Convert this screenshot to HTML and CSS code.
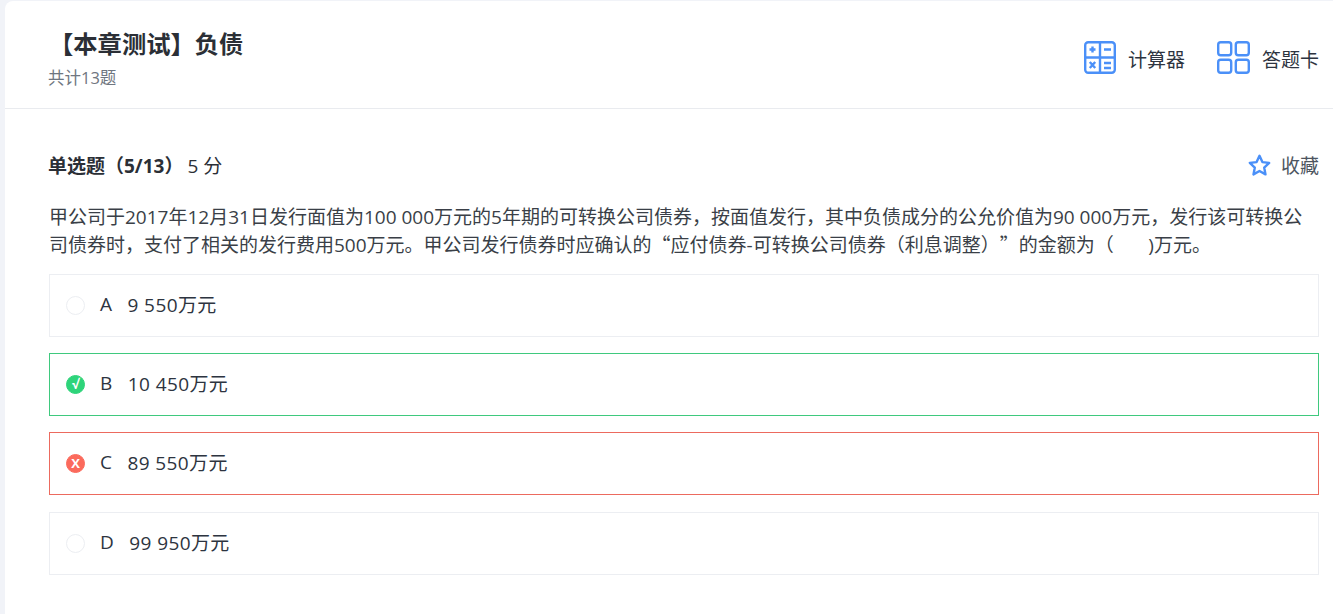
FILE: index.html
```html
<!DOCTYPE html>
<html lang="zh-CN">
<head>
<meta charset="utf-8">
<title>本章测试</title>
<link rel="stylesheet" href="styles.css">
</head>
<body>
<main class="card">
  <header class="head">
    <div class="head-text">
      <h1 class="title">【本章测试】负债</h1>
      <p class="count">共计13题</p>
    </div>
    <div class="tools">
      <div class="tool">
        <svg class="tool-icon" width="32" height="33" viewBox="0 0 32 33" fill="none" stroke="#4b90f8" stroke-width="2.400">
          <rect x="1.200" y="1.200" width="29.600" height="30.600" rx="3"/>
          <path d="M16 1v31M1 16.500h30"/>
          <path d="M5.500 8.500h6M8.500 5.500v6M20 8.500h7M5.800 21l5.400 6M11.200 21l-5.400 6M20 22h7M20 27h7"/>
        </svg>
        <span class="tool-label">计算器</span>
      </div>
      <div class="tool">
        <svg class="tool-icon" width="33" height="33" viewBox="0 0 33 33" fill="none" stroke="#4b90f8" stroke-width="2.400">
          <rect x="1.200" y="1.200" width="13" height="13" rx="2.500"/>
          <rect x="18.800" y="1.200" width="13" height="13" rx="2.500"/>
          <rect x="1.200" y="18.800" width="13" height="13" rx="2.500"/>
          <rect x="18.800" y="18.800" width="13" height="13" rx="2.500"/>
        </svg>
        <span class="tool-label">答题卡</span>
      </div>
    </div>
  </header>
  <section class="body">
    <div class="q-head">
      <div class="q-type"><strong>单选题（5/13）</strong><span class="score">5 分</span></div>
      <div class="fav">
        <svg width="23" height="23" viewBox="0 0 23 23" fill="none" stroke="#4b90f8" stroke-width="2.400" stroke-linejoin="round">
          <path d="M11.500 1.800l2.900 6.300 6.800.8-5 4.700 1.300 6.800-6-3.400-6 3.400 1.300-6.800-5-4.700 6.800-.8z"/>
        </svg>
        <span>收藏</span>
      </div>
    </div>
    <p class="stem">甲公司于2017年12月31日发行面值为100 000万元的5年期的可转换公司债券，按面值发行，其中负债成分的公允价值为90 000万元，发行该可转换公司债券时，支付了相关的发行费用500万元。甲公司发行债券时应确认的<span class="cjk">“</span>应付债券-可转换公司债券（利息调整）<span class="cjk">”</span>的金额为（&nbsp;&nbsp;&nbsp;&nbsp;&nbsp;&nbsp;&nbsp;)万元。</p>
    <ul class="options">
      <li class="option">
        <span class="mark"></span><span class="letter">A</span><span class="answer">9 550万元</span>
      </li>
      <li class="option right">
        <span class="mark">√</span><span class="letter">B</span><span class="answer">10 450万元</span>
      </li>
      <li class="option wrong">
        <span class="mark">X</span><span class="letter">C</span><span class="answer">89 550万元</span>
      </li>
      <li class="option">
        <span class="mark"></span><span class="letter">D</span><span class="answer">99 950万元</span>
      </li>
    </ul>
  </section>
</main>
</body>
</html>
```

FILE: styles.css
```css
* { box-sizing: border-box; }
html, body { margin: 0; padding: 0; height: 100%; overflow: hidden; }
body {
  background: #f1f3f8;
  padding: 1px 0 0 5px;
  font-family: "Open Sans", "Noto Sans CJK SC", sans-serif;
  color: #2d3440;
  text-spacing-trim: space-all;
}
.card {
  background: #fff;
  border-radius: 8px 0 0 0;
  height: 100%;
}
.head {
  height: 108px;
  border-bottom: 1px solid #e9ebef;
  padding: 27px 14px 0 44px;
  display: flex;
  justify-content: space-between;
}
.title {
  margin: 0;
  font-size: 24.300px;
  line-height: 32px;
  font-weight: 700;
  color: #2b2f36;
}
.count {
  margin: 8px 0 0 -1px;
  font-size: 16.500px;
  line-height: 20px;
  color: #6f7680;
}
.tools {
  display: flex;
  gap: 32px;
  padding-top: 13px;
}
.tool {
  display: flex;
  align-items: center;
  gap: 12px;
  height: 33px;
  font-size: 19px;
  color: #2d3440;
}
.tool-label { margin-top: 2px; }
.body { padding: 0 14px 0 44px; }
.q-head {
  display: flex;
  justify-content: space-between;
  align-items: center;
  height: 24px;
  margin-top: 44px;
}
.q-type { font-size: 19px; color: #2b2f36; margin-left: -1px; }
.q-type strong { font-weight: 700; }
.score { margin-left: 4px; }
.fav {
  display: flex;
  align-items: center;
  gap: 10px;
  font-size: 19px;
  color: #4d5560;
}
.stem {
  margin: 26px 0 0;
  font-size: 19px;
  line-height: 28px;
  color: #3a3f47;
}
.cjk { font-family: "Noto Sans CJK SC", sans-serif; line-height: 1; }
.options {
  list-style: none;
  margin: 15px 0 0;
  padding: 0;
  display: flex;
  flex-direction: column;
  gap: 16px;
}
.option {
  height: 63px;
  border: 1px solid #eceef2;
  display: flex;
  align-items: center;
  padding-left: 16px;
  font-size: 19px;
  color: #2d3440;
}
.option:last-child { margin-top: 1px; }
.letter { margin-right: 15.500px; margin-top: -3px; }
.answer { margin-top: -3px; letter-spacing: 0.400px; }
.mark {
  width: 19px;
  height: 19px;
  border: 1px solid #eceef2;
  border-radius: 50%;
  margin-right: 15px;
  display: flex;
  align-items: center;
  justify-content: center;
  font-size: 13px;
  line-height: 1;
  font-weight: 700;
  color: #fff;
}
.right { border-color: #3fc97e; }
.right .mark { background: #2ed47a; border-color: #2ed47a; }
.wrong { border-color: #ec6a5e; }
.wrong .mark { background: #fb6a5c; border-color: #fb6a5c; }
```
